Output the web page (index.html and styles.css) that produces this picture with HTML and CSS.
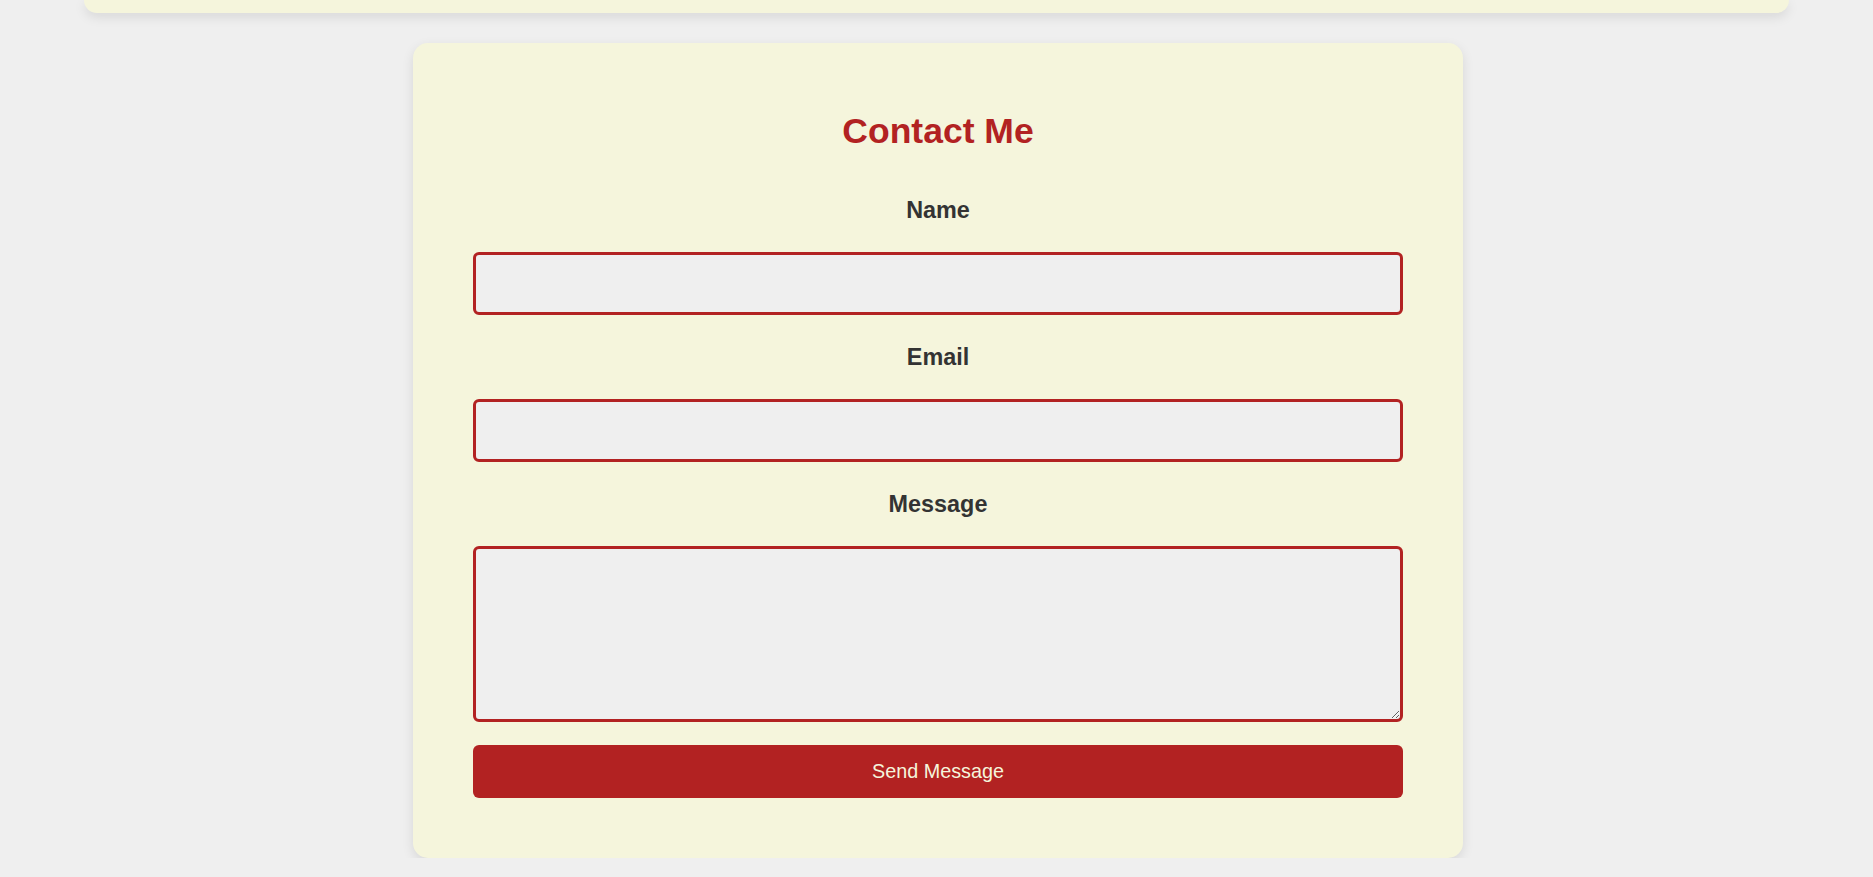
FILE: index.html
```html
<!DOCTYPE html>
<html lang="en">
<head>
<meta charset="utf-8">
<title>Contact Me</title>
<link rel="stylesheet" href="styles.css">
</head>
<body>
  <div class="top-card"></div>
  <section class="contact-card">
    <h2 class="contact-title">Contact Me</h2>
    <form class="contact-form">
      <label class="field-label" for="name">Name</label>
      <input class="field-input" type="text" id="name">
      <label class="field-label" for="email">Email</label>
      <input class="field-input" type="email" id="email">
      <label class="field-label" for="message">Message</label>
      <textarea class="field-textarea" id="message"></textarea>
      <button class="send-btn" type="button">Send Message</button>
    </form>
  </section>
</body>
</html>
```

FILE: styles.css
```css
html, body {
  margin: 0;
  padding: 0;
}

body {
  background: #efefef;
  font-family: "Liberation Sans", Arial, sans-serif;
  font-size: 18px;
  color: #333;
  display: flex;
  flex-direction: column;
  align-items: center;
}

.top-card {
  width: 1705px;
  height: 13px;
  background: #f5f5dc;
  border-radius: 0 0 15px 15px;
  box-shadow: 0 4px 12px rgba(0, 0, 0, 0.1);
}

.contact-card {
  width: 1050px;
  box-sizing: border-box;
  margin: 30px 0 0 3px;
  padding: 68px 60px 60px;
  background: #f5f5dc;
  border-radius: 15px;
  box-shadow: 0 4px 12px rgba(0, 0, 0, 0.1);
}

.contact-title {
  margin: 0;
  text-align: center;
  color: #b22222;
  font-size: 35.5px;
  font-weight: bold;
  line-height: normal;
}

.contact-form {
  display: flex;
  flex-direction: column;
  margin-top: 45px;
}

.field-label {
  display: block;
  text-align: center;
  font-weight: bold;
  font-size: 23.4px;
  line-height: normal;
  color: #333;
  margin-bottom: 28px;
}

.field-input,
.field-textarea {
  display: block;
  width: 100%;
  box-sizing: border-box;
  border: 3px solid #b22222;
  border-radius: 6px;
  background: #efefef;
  font-family: "Liberation Sans", Arial, sans-serif;
  font-size: 18px;
  margin: 0 0 29px;
  padding: 10px;
}

.field-input {
  height: 63px;
}

.field-textarea {
  height: 176px;
  margin-bottom: 23px;
  resize: vertical;
}

.send-btn {
  height: 53px;
  width: 100%;
  border: none;
  border-radius: 6px;
  background: #b22222;
  color: #f5f5dc;
  font-family: "Liberation Sans", Arial, sans-serif;
  font-size: 19.8px;
  cursor: pointer;
  padding: 0;
}
```
